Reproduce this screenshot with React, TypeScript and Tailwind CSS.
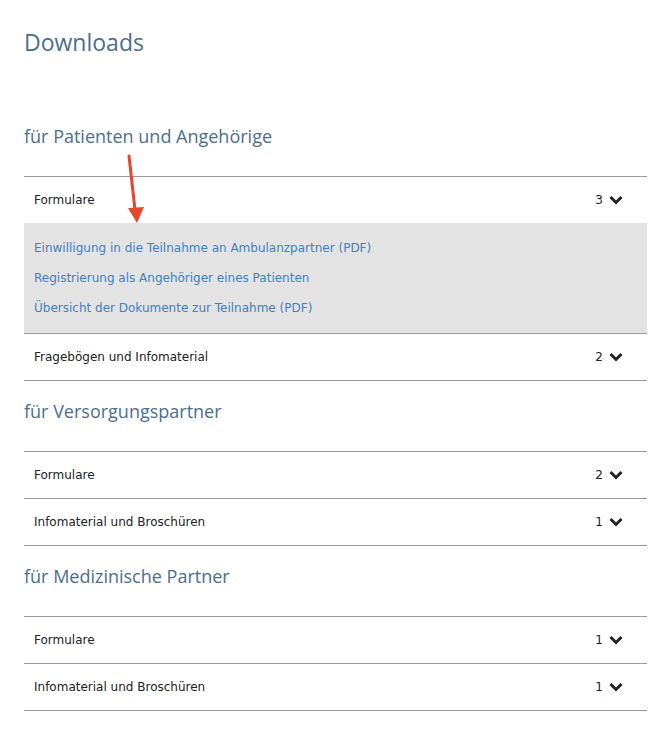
import React from "react";

type Row = { title: string; count: number; links?: string[] };
type Section = { heading: string; rows: Row[] };

const sections: Section[] = [
  {
    heading: "für Patienten und Angehörige",
    rows: [
      {
        title: "Formulare",
        count: 3,
        links: [
          "Einwilligung in die Teilnahme an Ambulanzpartner (PDF)",
          "Registrierung als Angehöriger eines Patienten",
          "Übersicht der Dokumente zur Teilnahme (PDF)",
        ],
      },
      { title: "Fragebögen und Infomaterial", count: 2 },
    ],
  },
  {
    heading: "für Versorgungspartner",
    rows: [
      { title: "Formulare", count: 2 },
      { title: "Infomaterial und Broschüren", count: 1 },
    ],
  },
  {
    heading: "für Medizinische Partner",
    rows: [
      { title: "Formulare", count: 1 },
      { title: "Infomaterial und Broschüren", count: 1 },
    ],
  },
];

const Chevron = () => (
  <svg width="14" height="10" viewBox="0 0 14 10" className="ml-[6px]">
    <path d="M1.5 2 L7 7.5 L12.5 2" fill="none" stroke="#222" strokeWidth="3" strokeLinejoin="miter" />
  </svg>
);

const headingFont = { fontFamily: '"Open Sans", "DejaVu Sans", sans-serif' };

const App = () => {
  return (
    <div
      className="relative min-h-[739px] w-full bg-white pl-[24px] pr-[23px] pt-[28px]"
      style={{ fontFamily: '"DejaVu Sans", Verdana, sans-serif' }}
    >
      <h1 className="text-[23px] leading-[28px] text-[#4b6e8f]" style={headingFont}>
        Downloads
      </h1>

      <div className="mt-[50px]">
        {sections.map((s) => (
          <div key={s.heading} className="pt-[19px]">
            <h2 className="mb-[29px] text-[18px] leading-[22px] text-[#4b6e8f]" style={headingFont}>
              {s.heading}
            </h2>
            <div className="border-b border-[#9a9a9a]">
              {s.rows.map((r, i) => (
                <div key={i} className="border-t border-[#9a9a9a]">
                  <div className="flex h-[46px] items-center justify-between pl-[10px] pr-[24px] text-[12px] text-[#222]">
                    <span>{r.title}</span>
                    <span className="flex items-center">
                      {r.count}
                      <Chevron />
                    </span>
                  </div>
                  {r.links && (
                    <div className="flex flex-col bg-[#e3e3e3] py-[10px] pl-[10px] text-[12px] leading-[30px] text-[#3f7fc0]">
                      {r.links.map((l) => (
                        <a key={l} href="#" className="w-fit">
                          {l}
                        </a>
                      ))}
                    </div>
                  )}
                </div>
              ))}
            </div>
          </div>
        ))}
      </div>

      {/* annotation arrow */}
      <svg className="absolute left-[118px] top-[152px]" width="30" height="76" viewBox="0 0 30 76">
        <line x1="11" y1="4" x2="17" y2="58" stroke="#e8452c" strokeWidth="3" strokeLinecap="round" />
        <polygon points="10,56 26,55 19,71" fill="#e8452c" />
      </svg>
    </div>
  );
};

export default App;
